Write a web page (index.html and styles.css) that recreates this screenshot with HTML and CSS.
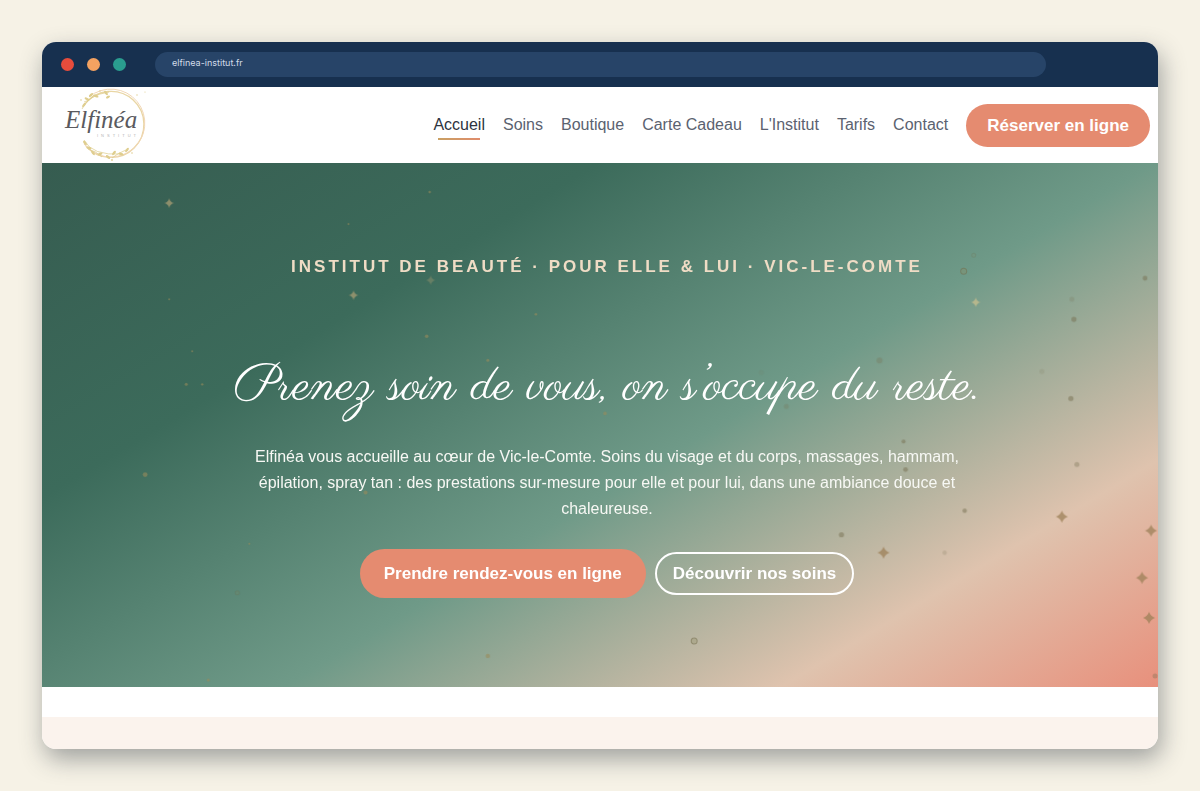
FILE: index.html
```html
<!DOCTYPE html>
<html lang="fr">
<head>
  <meta charset="UTF-8" />
  <meta name="viewport" content="width=device-width, initial-scale=1.0"/>
  <title>Elfinéa Institut</title>
  <link rel="stylesheet" href="styles.css">
</head>
<body>

<div class="browser">
  <div class="toolbar">
    <div class="dots">
      <span class="dot red"></span>
      <span class="dot orange"></span>
      <span class="dot green"></span>
    </div>
    <input class="address" type="text" value="elfinea-institut.fr" aria-label="Adresse" readonly>
  </div>

  <header class="header">
    <a href="#" class="logo" aria-label="Elfinéa Institut">
      <svg width="88" height="76" viewBox="0 0 88 76">
        <g fill="none" stroke="#e9d6a4">
          <path d="M21 17 A33 33 0 1 1 22 59" stroke-width="1.4"/>
          <path d="M25 10 A34 34 0 1 1 20 57" stroke-width="1" stroke="#f1d6b6"/>
          <path d="M18 22 Q24 8 45 5 M20 53 Q28 69 58 67 M20 15 Q26 14 30 8 M24 62 Q32 64 38 70 M48 71 Q54 66 62 63" stroke="#ddcb8a" stroke-width="0.7"/>
        </g>
        <g fill="#dfce8f">
          <ellipse cx="20" cy="18" rx="2.6" ry="1.2" transform="rotate(-50 20 18)"/>
          <ellipse cx="23" cy="12" rx="2.6" ry="1.2" transform="rotate(25 23 12)"/>
          <ellipse cx="27" cy="8" rx="2.6" ry="1.2" transform="rotate(-40 27 8)"/>
          <ellipse cx="32" cy="9" rx="2.6" ry="1.2" transform="rotate(20 32 9)"/>
          <ellipse cx="42" cy="6" rx="2.6" ry="1.3" transform="rotate(50 42 6)"/>
          <ellipse cx="44" cy="10" rx="2.2" ry="1.2" transform="rotate(-30 44 10)"/>
          <ellipse cx="21" cy="56" rx="2.6" ry="1.3" transform="rotate(50 21 56)"/>
          <ellipse cx="25" cy="61" rx="2.6" ry="1.3" transform="rotate(10 25 61)"/>
          <ellipse cx="29" cy="66" rx="2.6" ry="1.2" transform="rotate(50 29 66)"/>
          <ellipse cx="36" cy="67" rx="2.6" ry="1.3" transform="rotate(-20 36 67)"/>
          <ellipse cx="44" cy="70" rx="2.6" ry="1.3" transform="rotate(40 44 70)"/>
          <ellipse cx="50" cy="66" rx="2.6" ry="1.3" transform="rotate(-50 50 66)"/>
          <ellipse cx="57" cy="67" rx="2.6" ry="1.2" transform="rotate(15 57 67)"/>
          <ellipse cx="63" cy="63" rx="2.6" ry="1.2" transform="rotate(-50 63 63)"/>
          <circle cx="17" cy="13" r="0.8"/>
          <circle cx="36" cy="4" r="0.8"/>
          <circle cx="73" cy="8" r="0.7"/>
          <circle cx="81" cy="5" r="0.6"/>
          <circle cx="48" cy="73" r="0.9"/>
          <circle cx="68" cy="66" r="0.8"/>
        </g>
        <text class="logo-name" x="1" y="41">Elfinéa</text>
        <text class="logo-sub" x="33" y="50">INSTITUT</text>
      </svg>
    </a>
    <nav class="nav">
      <a href="#" class="active">Accueil</a>
      <a href="#">Soins</a>
      <a href="#">Boutique</a>
      <a href="#">Carte Cadeau</a>
      <a href="#">L'Institut</a>
      <a href="#">Tarifs</a>
      <a href="#">Contact</a>
    </nav>
    <a href="#" class="btn btn-nav">Réserver en ligne</a>
  </header>

  <section class="hero">
    <svg class="sparkles" viewBox="0 0 1116 523" preserveAspectRatio="xMidYMid slice" aria-hidden="true">
      <defs>
        <path id="star" d="M0 -5 Q0.8 -0.8 5 0 Q0.8 0.8 0 5 Q-0.8 0.8 -5 0 Q-0.8 -0.8 0 -5Z"/>
        <path id="bigstar" d="M0 -6 Q1.6 -1.6 6 0 Q1.6 1.6 0 6 Q-1.6 1.6 -6 0 Q-1.6 -1.6 0 -6Z"/>
      </defs>
      <g fill="#a39a72" opacity="0.8">
        <use href="#star" x="128" y="40"/>
        <use href="#star" x="312" y="132"/>
        <use href="#star" x="389" y="117" opacity="0.5"/>
        <use href="#star" x="933" y="139" fill="#c5bd8e"/>
      </g>
      <g fill="#9d8058" opacity="0.75">
        <use href="#bigstar" x="841" y="389"/>
        <use href="#bigstar" x="1019" y="353"/>
        <use href="#bigstar" x="1108" y="367"/>
        <use href="#bigstar" x="1099" y="414"/>
        <use href="#bigstar" x="1106" y="454"/>
      </g>
      <g fill="#9a8c5c" opacity="0.6">
        <circle cx="104" cy="311" r="2.4"/>
        <circle cx="145" cy="221" r="1.5"/>
        <circle cx="161" cy="221" r="1.2"/>
        <circle cx="128" cy="136" r="1"/>
        <circle cx="151" cy="188" r="1"/>
        <circle cx="307" cy="61" r="1"/>
        <circle cx="388" cy="29" r="1.2"/>
        <circle cx="385" cy="173" r="1.8"/>
        <circle cx="494" cy="151" r="1.3"/>
        <circle cx="446" cy="197" r="1.5"/>
        <circle cx="563" cy="250" r="1.8"/>
        <circle cx="324" cy="329" r="2"/>
        <circle cx="208" cy="380" r="1"/>
        <circle cx="167" cy="516" r="1.5"/>
        <circle cx="446" cy="492" r="2.2"/>
      </g>
      <g fill="#766f50" opacity="0.5">
        <circle cx="744" cy="243" r="2.5" opacity="0.5"/>
        <circle cx="837" cy="197" r="3" opacity="0.6"/>
        <circle cx="861" cy="278" r="2"/>
        <circle cx="863" cy="306" r="2.4"/>
        <circle cx="922" cy="347" r="2.2"/>
        <circle cx="799" cy="371" r="2.6"/>
        <circle cx="1031" cy="156" r="2.6"/>
        <circle cx="1102" cy="115" r="2.4"/>
        <circle cx="1028" cy="235" r="2.6"/>
        <circle cx="1034" cy="301" r="2.5" opacity="0.7"/>
        <circle cx="1112" cy="512" r="2.5" opacity="0.7"/>
        <circle cx="902" cy="389" r="2.2" opacity="0.4"/>
        <circle cx="999" cy="208" r="2.5" opacity="0.3"/>
        <circle cx="1029" cy="136" r="2.5" opacity="0.4"/>
        <circle cx="719" cy="209" r="2.5" opacity="0.2"/>
      </g>
      <g fill="#8d8a60" fill-opacity="0.3" stroke="#716c4b" stroke-opacity="0.5">
        <circle cx="921" cy="108" r="3"/>
        <circle cx="652" cy="477" r="3"/>
        <circle cx="196" cy="429" r="2" opacity="0.5"/>
        <circle cx="931" cy="92" r="2" opacity="0.4"/>
      </g>
    </svg>
    <div class="hero-content">
      <p class="eyebrow">Institut de beauté · Pour elle &amp; lui · Vic-le-Comte</p>
      <h1>Prenez soin de vous, on s’occupe du reste.</h1>
      <p class="intro">Elfinéa vous accueille au cœur de Vic-le-Comte. Soins du visage et du corps, massages, hammam, épilation, spray tan : des prestations sur-mesure pour elle et pour lui, dans une ambiance douce et chaleureuse.</p>
      <div class="actions">
        <a href="#" class="btn btn-primary">Prendre rendez-vous en ligne</a>
        <a href="#" class="btn btn-outline">Découvrir nos soins</a>
      </div>
    </div>
  </section>

  <div class="next-section"></div>
</div>

</body>
</html>
```
FILE: styles.css
```css
* {
  box-sizing: border-box;
}
body {
  margin: 0;
  padding: 42px;
  background: #f6f2e6;
  font-family: "Liberation Sans", Arial, sans-serif;
}
a {
  text-decoration: none;
}
.browser {
  background: white;
  border-radius: 14px;
  overflow: hidden;
  box-shadow: 3px 10px 24px rgba(40,50,60,0.42);
}
.toolbar {
  display: flex;
  align-items: center;
  height: 45px;
  padding: 0 112px 0 19px;
  background: #17304f;
}
.dots {
  display: flex;
  gap: 13px;
  margin-right: 29px;
}
.dot {
  width: 13px;
  height: 13px;
  border-radius: 50%;
}
.red {
  background: #e74c3c;
}
.orange {
  background: #f4a261;
}
.green {
  background: #2a9d8f;
}
.address {
  flex: 1;
  height: 25px;
  padding: 0 17px 4px;
  border: none;
  border-radius: 13px;
  background: #274468;
  color: #d3dce8;
  font-family: Inter, sans-serif;
  font-size: 9px;
}
.header {
  display: flex;
  align-items: center;
  height: 76px;
  padding: 0 8px 0 22px;
}
.logo {
  display: flex;
  margin-right: auto;
}
.logo-name {
  fill: #5a5a5e;
  font-family: "Liberation Serif", serif;
  font-style: italic;
  font-size: 25px;
}
.logo-sub {
  fill: #b3b3b3;
  font-size: 4px;
  letter-spacing: 3px;
}
.nav {
  display: flex;
  gap: 18px;
  margin-right: 18px;
}
.nav a {
  color: #5b6270;
  font-size: 16px;
  line-height: 20px;
  padding: 5px 0;
}
.nav .active {
  color: #2d3340;
  background: linear-gradient(90deg, #c9a063, #e08c6c) center bottom / 42px 2px no-repeat;
}
.btn {
  border-radius: 25px;
  color: white;
  font-weight: bold;
  font-size: 17px;
  line-height: 19px;
}
.btn-nav {
  padding: 12px 21px;
  background: #e58b70;
}
.hero {
  position: relative;
  padding: 93px 0 89px 14px;
  background: linear-gradient(149deg, #365c50 0%, #3c6b5b 28%, #6f9a88 56%, #dfc3ae 81%, #e8907c 100%);
}
.sparkles {
  position: absolute;
  inset: 0;
  width: 100%;
  height: 100%;
}
.hero-content {
  position: relative;
  display: flex;
  flex-direction: column;
  align-items: center;
  text-align: center;
}
.eyebrow {
  margin: 0 0 75px;
  color: #efdcc5;
  font-size: 17px;
  font-weight: bold;
  line-height: 22px;
  letter-spacing: 3px;
  text-transform: uppercase;
}
h1 {
  margin: 0 0 23px;
  color: white;
  font-family: "Parisienne", "Liberation Serif", serif;
  font-weight: normal;
  font-size: 51px;
  line-height: 68px;
}
.intro {
  max-width: 720px;
  margin: 0 0 27px;
  color: #f7f8f4;
  font-size: 16px;
  line-height: 26px;
}
.actions {
  display: flex;
  align-items: center;
  gap: 9px;
}
.btn-primary {
  padding: 15px 24px;
  background: #e58b70;
}
.btn-outline {
  padding: 10px 16px;
  border: 2px solid white;
}
.next-section {
  height: 62px;
  border-top: 30px solid white;
  background: #fbf3ed;
}
```
